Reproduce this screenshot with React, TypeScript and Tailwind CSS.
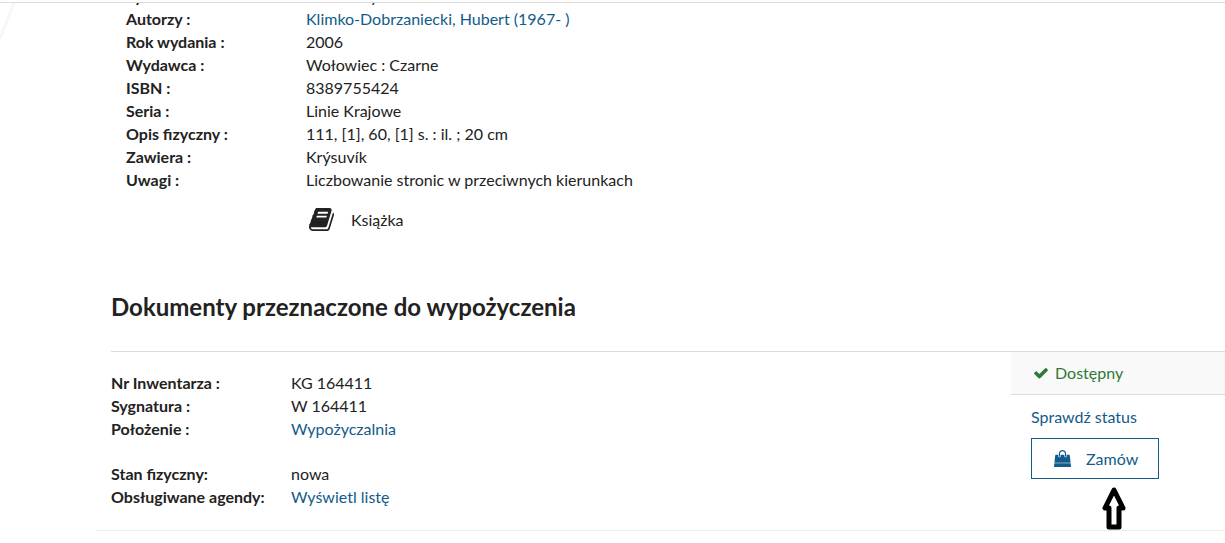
import type { ReactNode } from "react";

const details: { label: string; value: string; href?: string }[] = [
  { label: "Tytuł :", value: "Dom Róży" },
  { label: "Autorzy :", value: "Klimko-Dobrzaniecki, Hubert (1967- )", href: "#autor" },
  { label: "Rok wydania :", value: "2006" },
  { label: "Wydawca :", value: "Wołowiec : Czarne" },
  { label: "ISBN :", value: "8389755424" },
  { label: "Seria :", value: "Linie Krajowe" },
  { label: "Opis fizyczny :", value: "111, [1], 60, [1] s. : il. ; 20 cm" },
  { label: "Zawiera :", value: "Krýsuvík" },
  { label: "Uwagi :", value: "Liczbowanie stronic w przeciwnych kierunkach" },
];

function Icon({ d, className }: { d: string; className: string }) {
  return (
    <svg viewBox="0 0 1792 1792" fill="currentColor" aria-hidden="true" className={className}>
      <path d={d} />
    </svg>
  );
}

const book =
  "M1703 478q40 57 18 129l-275 906q-19 64-76.5 107.500t-122.500 43.500h-923q-77 0-148.500-53.500t-99.500-131.500q-24-67-2-127 0-4 3-27t4-37q1-8-3-21.500t-3-19.500q2-11 8-21t16.500-23.500 16.500-23.500q23-38 45-91.500t30-91.500q3-10 .5-30t-.5-28q3-11 17-28t17-23q21-36 42-92t25-90q1-9-2.500-32t.5-28q4-13 22-30.500t22-22.500q19-26 42.500-84.500t27.500-96.500q1-8-3-25.500t-2-26.500q2-8 9-18t18-23 17-21q8-12 16.500-30.500t15-35 16-36 19.500-32 26.500-23.500 36-11.500 47.500 5.500l-1 3q38-9 51-9h761q74 0 114 56t18 130l-274 906q-36 119-71.500 153.500t-128.500 34.500h-869q-27 0-38 15-11 16-1 43 24 70 144 70h923q29 0 56-15.500t35-41.500l300-987q7-22 5-57 38 15 59 43zm-1064 2q-4 13 2 22.500t20 9.500h608q13 0 25.500-9.500t16.500-22.500l21-64q4-13-2-22.500t-20-9.500h-608q-13 0-25.500 9.500t-16.500 22.500zm-83 256q-4 13 2 22.500t20 9.500h608q13 0 25.500-9.500t16.500-22.500l21-64q4-13-2-22.500t-20-9.500h-608q-13 0-25.500 9.500t-16.500 22.500z";

const check =
  "M1671 566q0 40-28 68l-724 724-136 136q-28 28-68 28t-68-28l-136-136-362-362q-28-28-28-68t28-68l136-136q28-28 68-28t68 28l294 295 656-657q28-28 68-28t68 28l136 136q28 28 28 68z";

const bag =
  "M1757 1408l35 313q3 28-16 50-19 21-48 21h-1664q-29 0-48-21-19-22-16-50l35-313h1722zm-93-839l86 775h-1708l86-775q3-24 21-40.500t43-16.500h256v128q0 53 37.500 90.500t90.500 37.500 90.500-37.500 37.500-90.500v-128h384v128q0 53 37.500 90.500t90.500 37.500 90.500-37.500 37.500-90.500v-128h256q25 0 43 16.500t21 40.500zm-384-185v256q0 26-19 45t-45 19-45-19-19-45v-256q0-106-75-181t-181-75-181 75-75 181v256q0 26-19 45t-45 19-45-19-19-45v-256q0-159 112.500-271.500t271.500-112.500 271.500 112.500 112.500 271.500z";

function Row({ label, children }: { label: string; children: ReactNode }) {
  return (
    <div className="flex">
      <dt className="w-[180px] shrink-0 font-bold">{label}</dt>
      <dd>{children}</dd>
    </div>
  );
}

function Link({ href, children }: { href: string; children: ReactNode }) {
  return (
    <a href={href} className="text-[#125b8a] hover:underline">
      {children}
    </a>
  );
}

export default function App() {
  return (
    <div className="relative bg-white font-['Lato',sans-serif] text-base leading-[23px] text-[#222]">
      <header className="h-[3px] border-b border-[#dcdcdc]" />

      <svg className="absolute top-[3px] left-0 h-[38px] w-4" viewBox="0 0 16 38" aria-hidden="true">
        <path d="M14 0L0 36" stroke="#f7f7f7" strokeWidth="3" fill="none" />
      </svg>

      <main className="overflow-hidden">
        <dl className="-mt-[19px] pl-[126px]">
          {details.map((item) => (
            <Row key={item.label} label={item.label}>
              {item.href ? <Link href={item.href}>{item.value}</Link> : item.value}
            </Row>
          ))}
        </dl>

        <div className="mt-[17px] flex h-[23px] items-center gap-4 pl-[308px]">
          <Icon d={book} className="size-[27px]" />
          <span>Książka</span>
        </div>

        <section className="ml-24 border-b border-[#ececec] pl-[15px]">
          <h2 className="pt-[60px] pb-7 text-2xl leading-8 font-bold">Dokumenty przeznaczone do wypożyczenia</h2>

          <div className="flex border-t border-[#dcdcdc]">
            <dl className="flex-1 pt-[19px] pb-[22px]">
              <Row label="Nr Inwentarza :">KG 164411</Row>
              <Row label="Sygnatura :">W 164411</Row>
              <Row label="Położenie :">
                <Link href="#wypozyczalnia">Wypożyczalnia</Link>
              </Row>
              <div className="mt-[22px]">
                <Row label="Stan fizyczny:">nowa</Row>
                <Row label="Obsługiwane agendy:">
                  <Link href="#agendy">Wyświetl listę</Link>
                </Row>
              </div>
            </dl>

            <aside className="w-[214px] shrink-0">
              <p className="flex h-[43px] items-center gap-1.5 border-b border-[#dcdcdc] bg-[#f9f9f9] pb-px pl-[22px] text-[#2f7a36]">
                <Icon d={check} className="size-4" />
                Dostępny
              </p>
              <div className="flex flex-col items-start pt-2.5 pl-5">
                <Link href="#status">Sprawdź status</Link>
                <div className="relative mt-2.5">
                  <button
                    type="button"
                    className="flex h-[41px] w-32 items-center gap-[15px] border border-[#125b8a] pl-[22px] text-[#125b8a]"
                  >
                    <Icon d={bag} className="size-[17px]" />
                    Zamów
                  </button>
                  <svg
                    className="absolute top-[49px] left-[71px] h-[43px] w-6"
                    viewBox="0 0 24 43"
                    fill="white"
                    stroke="black"
                    strokeWidth="5"
                    strokeLinejoin="round"
                    aria-hidden="true"
                  >
                    <path d="M12 3L3 21H7V40H17V21H21Z" />
                  </svg>
                </div>
              </div>
            </aside>
          </div>
        </section>
      </main>
    </div>
  );
}
